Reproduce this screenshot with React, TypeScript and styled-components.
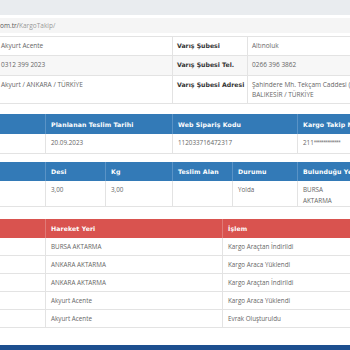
import styled, { createGlobalStyle } from "styled-components";

const GlobalStyle = createGlobalStyle`
  html, body {
    margin: 0;
    padding: 0;
    width: 350px;
    height: 350px;
    overflow: hidden;
    background: #ffffff;
    font-family: "Open Sans", "Liberation Sans", sans-serif;
  }
`;

const Page = styled.div`
  width: 350px;
  height: 350px;
  display: flex;
  flex-direction: column;
  overflow: hidden;
`;

const TopBand = styled.div`
  height: 15px;
  background: #e9ecef;
  flex-shrink: 0;
`;

const Breadcrumb = styled.div`
  margin-top: 3px;
  height: 15px;
  background: #f5f5f5;
  display: flex;
  align-items: center;
  font-size: 6.5px;
  color: #555;
  flex-shrink: 0;
  span {
    color: #999;
  }
`;

const InfoTable = styled.div`
  margin-top: 3px;
  display: grid;
  grid-template-columns: 172px 75px 1fr;
  border-bottom: 1px solid #e3e3e3;
  flex-shrink: 0;
`;

const InfoCell = styled.div<{ $h: number; $striped?: boolean; $label?: boolean }>`
  height: ${(p) => p.$h}px;
  box-sizing: border-box;
  padding: 4px 0 0 4px;
  border-top: 1px solid #e3e3e3;
  border-left: 1px solid #e3e3e3;
  background: ${(p) => (p.$striped ? "#f7f7f7" : "#fff")};
  font-size: ${(p) => (p.$label ? "6.2px" : "6.5px")};
  font-weight: ${(p) => (p.$label ? 700 : 400)};
  font-family: ${(p) =>
    p.$label ? '"DejaVu Sans", Verdana, sans-serif' : '"Open Sans", sans-serif'};
  color: ${(p) => (p.$label ? "#333" : "#666")};
  line-height: 10px;
  white-space: pre;
  overflow: hidden;
  &:nth-child(3n + 1) {
    border-left: none;
    padding-left: 1px;
  }
`;

const Table = styled.div<{ $cols: string; $top: number }>`
  margin-top: ${(p) => p.$top}px;
  display: grid;
  grid-template-columns: ${(p) => p.$cols};
  flex-shrink: 0;
`;

const HeadCell = styled.div<{ $tone: "blue" | "red"; $h: number }>`
  height: ${(p) => p.$h}px;
  box-sizing: border-box;
  background: ${(p) => (p.$tone === "blue" ? "#337ab7" : "#d9534f")};
  border-left: 1px solid ${(p) => (p.$tone === "blue" ? "#5a93c6" : "#e07a77")};
  color: #fff;
  font-family: "DejaVu Sans", Verdana, sans-serif;
  font-weight: 700;
  font-size: 6.2px;
  letter-spacing: 0.1px;
  display: flex;
  align-items: center;
  padding-left: 5px;
  white-space: nowrap;
  overflow: hidden;
  &:first-child {
    border-left: none;
  }
`;

const BodyCell = styled.div<{ $h: number; $first?: boolean }>`
  height: ${(p) => p.$h}px;
  box-sizing: border-box;
  border-left: ${(p) => (p.$first ? "none" : "1px solid #e3e3e3")};
  border-bottom: 1px solid #e3e3e3;
  color: #666;
  font-size: 6.3px;
  line-height: 11px;
  padding: 3px 0 0 5px;
  white-space: pre;
  overflow: hidden;
`;

const Masked = styled.span`
  font-size: 4.5px;
  letter-spacing: -0.6px;
  vertical-align: 1px;
`;

const BottomBar = styled.div`
  margin-top: auto;
  height: 5px;
  background: #1d4f8f;
  flex-shrink: 0;
`;

const infoRows = [
  { h: 19, left: "Akyurt Acente", label: "Varış Şubesi", value: "Altınoluk" },
  { h: 20, left: "0312 399 2023", label: "Varış Şubesi Tel.", value: "0266 396 3862", striped: true },
  {
    h: 28,
    left: "Akyurt / ANKARA / TÜRKİYE",
    label: "Varış Şubesi Adresi",
    value: "Şahindere Mh. Tekçam Caddesi (\nBALIKESİR / TÜRKİYE",
  },
];

const moves = [
  ["BURSA AKTARMA", "Kargo Araçtan İndirildi"],
  ["ANKARA AKTARMA", "Kargo Araca Yüklendi"],
  ["ANKARA AKTARMA", "Kargo Araçtan İndirildi"],
  ["Akyurt Acente", "Kargo Araca Yüklendi"],
  ["Akyurt Acente", "Evrak Oluşturuldu"],
];

function App() {
  return (
    <Page>
      <GlobalStyle />
      <TopBand />
      <Breadcrumb>
        om.tr/<span>KargoTakip/</span>
      </Breadcrumb>

      <InfoTable>
        {infoRows.map((r) => [
          <InfoCell key={r.label + "a"} $h={r.h} $striped={r.striped}>{r.left}</InfoCell>,
          <InfoCell key={r.label + "b"} $h={r.h} $striped={r.striped} $label>{r.label}</InfoCell>,
          <InfoCell key={r.label + "c"} $h={r.h} $striped={r.striped}>{r.value}</InfoCell>,
        ])}
      </InfoTable>

      <Table $cols="45px 127px 125px 1fr" $top={10}>
        <HeadCell $tone="blue" $h={20} />
        <HeadCell $tone="blue" $h={20}>Planlanan Teslim Tarihi</HeadCell>
        <HeadCell $tone="blue" $h={20}>Web Sipariş Kodu</HeadCell>
        <HeadCell $tone="blue" $h={20}>Kargo Takip No</HeadCell>
        <BodyCell $h={20} $first />
        <BodyCell $h={20}>20.09.2023</BodyCell>
        <BodyCell $h={20}>112033716472317</BodyCell>
        <BodyCell $h={20}>
          211<Masked>**************</Masked>
        </BodyCell>
      </Table>

      <Table $cols="45px 60px 67px 60px 65px 1fr" $top={8}>
        <HeadCell $tone="blue" $h={19} />
        <HeadCell $tone="blue" $h={19}>Desi</HeadCell>
        <HeadCell $tone="blue" $h={19}>Kg</HeadCell>
        <HeadCell $tone="blue" $h={19}>Teslim Alan</HeadCell>
        <HeadCell $tone="blue" $h={19}>Durumu</HeadCell>
        <HeadCell $tone="blue" $h={19}>Bulunduğu Yer</HeadCell>
        <BodyCell $h={26} $first />
        <BodyCell $h={26}>3,00</BodyCell>
        <BodyCell $h={26}>3,00</BodyCell>
        <BodyCell $h={26} />
        <BodyCell $h={26}>Yolda</BodyCell>
        <BodyCell $h={26}>{"BURSA\nAKTARMA"}</BodyCell>
      </Table>

      <Table $cols="45px 177px 1fr" $top={12}>
        <HeadCell $tone="red" $h={19} />
        <HeadCell $tone="red" $h={19}>Hareket Yeri</HeadCell>
        <HeadCell $tone="red" $h={19}>İşlem</HeadCell>
        {moves.map(([place, act], i) => [
          <BodyCell key={i + "a"} $h={18} $first />,
          <BodyCell key={i + "b"} $h={18}>{place}</BodyCell>,
          <BodyCell key={i + "c"} $h={18}>{act}</BodyCell>,
        ])}
      </Table>

      <BottomBar />
    </Page>
  );
}

export default App;
